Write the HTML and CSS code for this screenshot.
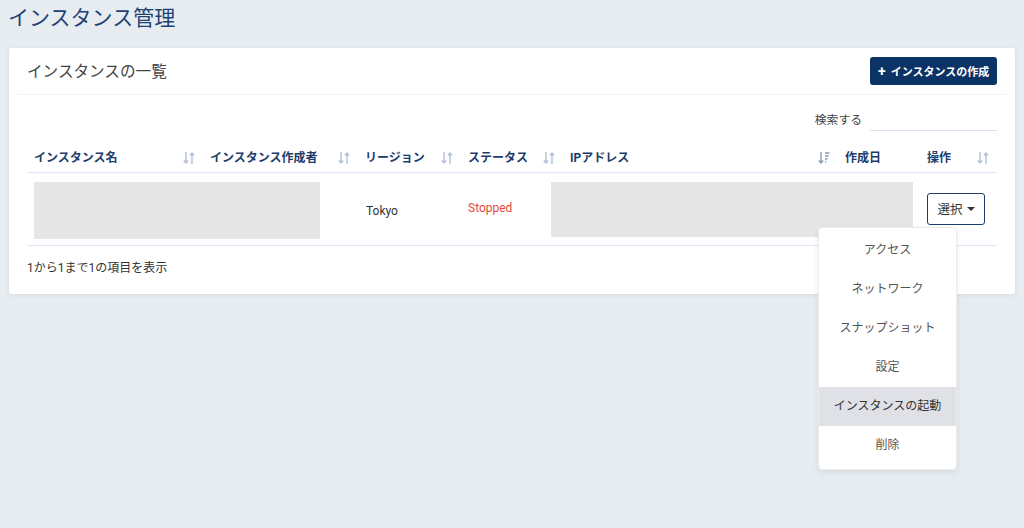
FILE: index.html
```html
<!DOCTYPE html>
<html lang="ja">
<head>
<meta charset="utf-8">
<title>インスタンス管理</title>
<link rel="stylesheet" href="styles.css">
</head>
<body>
<h1 class="page-title">インスタンス管理</h1>
<section class="card">
  <div class="card-header">
    <h2 class="card-title">インスタンスの一覧</h2>
    <button class="btn-create"><span class="plus">+</span>インスタンスの作成</button>
  </div>
  <div class="card-body">
    <div class="search-row">
      <label class="search-label">検索する</label>
      <input class="search-input" type="text">
    </div>
    <div class="grid head">
      <div class="th"><span>インスタンス名</span><svg class="sort" viewBox="0 0 12 14"><path d="M3 1v11M0.8 9.5L3 12l2.2-2.5M9 13V2M6.8 4.5L9 2l2.2 2.5"/></svg></div>
      <div class="th"><span>インスタンス作成者</span><svg class="sort" viewBox="0 0 12 14"><path d="M3 1v11M0.8 9.5L3 12l2.2-2.5M9 13V2M6.8 4.5L9 2l2.2 2.5"/></svg></div>
      <div class="th"><span>リージョン</span><svg class="sort" viewBox="0 0 12 14"><path d="M3 1v11M0.8 9.5L3 12l2.2-2.5M9 13V2M6.8 4.5L9 2l2.2 2.5"/></svg></div>
      <div class="th"><span>ステータス</span><svg class="sort" viewBox="0 0 12 14"><path d="M3 1v11M0.8 9.5L3 12l2.2-2.5M9 13V2M6.8 4.5L9 2l2.2 2.5"/></svg></div>
      <div class="th"><span>IPアドレス</span><svg class="sort active" viewBox="0 0 12 14"><path d="M3 1v11M0.8 9.5L3 12l2.2-2.5M7 2h4.5M7 5h3.5M7 8h2.5M7 11h1.2"/></svg></div>
      <div class="th"><span>作成日</span></div>
      <div class="th"><span>操作</span><svg class="sort" viewBox="0 0 12 14"><path d="M3 1v11M0.8 9.5L3 12l2.2-2.5M9 13V2M6.8 4.5L9 2l2.2 2.5"/></svg></div>
    </div>
    <div class="grid row">
      <div class="placeholder ph-name"></div>
      <div class="td region">Tokyo</div>
      <div class="td status">Stopped</div>
      <div class="placeholder ph-ip"></div>
      <div class="td action">
        <div class="dropdown">
          <button class="btn-select">選択<span class="caret"></span></button>
          <ul class="menu">
            <li>アクセス</li>
            <li>ネットワーク</li>
            <li>スナップショット</li>
            <li>設定</li>
            <li class="hover">インスタンスの起動</li>
            <li>削除</li>
          </ul>
        </div>
      </div>
    </div>
    <p class="info">1から1まで1の項目を表示</p>
  </div>
</section>
</body>
</html>
```

FILE: styles.css
```css
* { box-sizing: border-box; }
html, body { margin: 0; padding: 0; }
body {
  background: #e7ecf1;
  font-family: Roboto, "Noto Sans CJK JP", sans-serif;
  color: #333;
  width: 1024px;
  height: 528px;
  overflow: hidden;
}
.page-title {
  margin: 0;
  padding: 6px 8px 0;
  font-size: 21px;
  line-height: 24px;
  font-weight: 400;
  color: #1d4375;
}
.card {
  margin: 18px 9px 0;
  background: #fff;
  border-radius: 2px;
  box-shadow: 0 1px 4px rgba(0,0,0,0.08);
  padding: 0 9px;
}
.card-header {
  height: 47px;
  display: flex;
  align-items: center;
  justify-content: space-between;
  padding: 0 9px;
  border-bottom: 1px solid #f0f1f4;
}
.card-title {
  margin: 0;
  font-size: 15.6px;
  font-weight: 400;
  color: #444;
  line-height: 20px;
  padding-top: 2px;
}
.btn-create {
  height: 28px;
  width: 127px;
  background: #0c3366;
  color: #fff;
  border: none;
  border-radius: 3px;
  font-family: Roboto, "Noto Sans CJK JP", sans-serif;
  font-size: 11px;
  font-weight: 700;
  padding: 0 0 0 8px;
  display: flex;
  align-items: center;
  white-space: nowrap;
}
.plus {
  font-size: 14px;
  font-weight: 700;
  margin-right: 5px;
  line-height: 1;
}
.card-body { padding: 0 9px; }
.search-row {
  display: flex;
  justify-content: flex-end;
  align-items: center;
  gap: 8px;
  padding-top: 11px;
}
.search-label {
  font-size: 11.8px;
  color: #444;
  padding-bottom: 1px;
}
.search-input {
  width: 127px;
  height: 25px;
  border: none;
  border-bottom: 1px solid #d6e0f2;
  outline: none;
}
.grid {
  display: grid;
  grid-template-columns: 176px 155px 103px 102px 275px 82px 77px;
}
.head { border-bottom: 1px solid #dfe6f6; }
.th {
  display: flex;
  align-items: center;
  justify-content: space-between;
  padding: 13px 8px 0 7px;
  height: 41px;
  font-size: 12px;
  font-weight: 700;
  color: #1c3c6c;
}
.th span { line-height: 28px; }
.sort {
  width: 12px;
  height: 14px;
  fill: none;
  stroke: #b3c0d6;
  stroke-width: 1.4;
}
.sort.active { stroke: #8b9cbc; }
.row {
  height: 73px;
  align-items: center;
  border-bottom: 1px solid #dfe6f6;
}
.placeholder { background: #e6e6e6; }
.ph-name {
  grid-column: 1 / 3;
  width: 286px;
  height: 57px;
  margin-left: 7px;
  margin-top: 3px;
}
.ph-ip {
  grid-column: 5 / 7;
  width: 362px;
  height: 55px;
  margin-left: -12px;
  margin-top: 1px;
}
.td { font-size: 12px; }
.region { padding-left: 8px; padding-top: 3px; }
.status {
  padding-left: 7px;
  color: #e4493b;
  font-weight: 400;
  padding-bottom: 3px;
}
.action { padding-left: 7px; }
.dropdown { position: relative; width: 58px; }
.btn-select {
  width: 58px;
  height: 32px;
  border: 1px solid #1c3c6c;
  border-radius: 3px;
  background: #fff;
  font-family: Roboto, "Noto Sans CJK JP", sans-serif;
  font-size: 12.5px;
  color: #333;
  display: flex;
  align-items: center;
  justify-content: center;
  padding: 0 0 2px;
}
.caret {
  width: 0;
  height: 0;
  border-left: 4px solid transparent;
  border-right: 4px solid transparent;
  border-top: 4px solid #333;
  margin-left: 4px;
  margin-top: 2px;
}
.menu {
  position: absolute;
  top: 34px;
  right: 28px;
  width: 139px;
  margin: 0;
  padding: 3px 0 4px;
  list-style: none;
  background: #fff;
  border: 1px solid #ececec;
  border-radius: 4px;
  box-shadow: 0 2px 6px rgba(0,0,0,0.08);
  z-index: 10;
}
.menu li {
  height: 39px;
  line-height: 39px;
  text-align: center;
  font-size: 12px;
  color: #555;
}
.menu li.hover { background: #dfe1e6; color: #333; }
.info {
  margin: 0;
  padding: 14px 0 18px;
  font-size: 12px;
  line-height: 16px;
  color: #333;
}
```
